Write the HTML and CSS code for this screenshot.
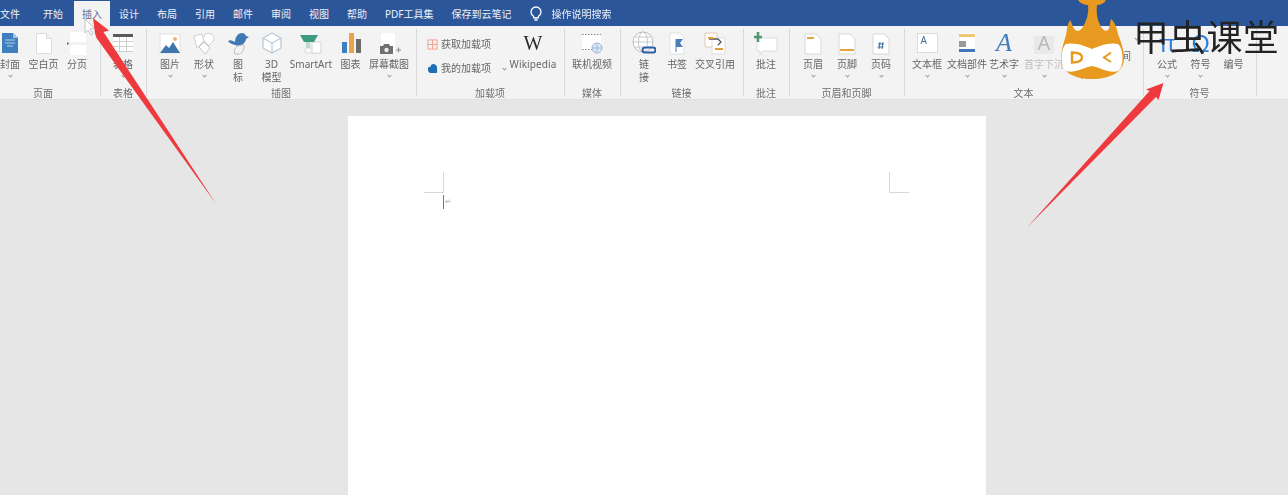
FILE: index.html
```html
<!DOCTYPE html>
<html lang="zh-CN">
<head>
<meta charset="utf-8">
<title>Word 插入</title>
<link rel="stylesheet" href="styles.css">
</head>
<body>
<div class="app">
  <nav class="tabs">
    <span class="tab tab-file">文件</span>
    <span class="tab">开始</span>
    <span class="tab active">插入</span>
    <span class="tab">设计</span>
    <span class="tab">布局</span>
    <span class="tab">引用</span>
    <span class="tab">邮件</span>
    <span class="tab">审阅</span>
    <span class="tab">视图</span>
    <span class="tab">帮助</span>
    <span class="tab">PDF工具集</span>
    <span class="tab">保存到云笔记</span>
    <svg class="bulb" viewBox="0 0 12 16"><path d="M3.6 10.500C1.800 9 1 7.800 1 6a5 5 0 0 1 10 0c0 1.800-.8 3-2.600 4.500L8 12H4z" fill="none" stroke="#fff" stroke-width="1.300"/><path d="M4.500 14h3" stroke="#fff" stroke-width="1.500"/></svg>
    <span class="tab tell">操作说明搜索</span>
  </nav>

  <section class="ribbon">
    <div class="group g-page">
      <div class="items">
        <div class="item w34">
          <svg class="ic" viewBox="0 0 24 26"><path d="M4 3h11l5 5v15H4z" fill="#3f7fbf"/><path d="M15 3l5 5h-5z" fill="#9cc2e5"/><path d="M7 10h10M7 13h10M9 16h6" stroke="#b5d2ec" stroke-width="1.200"/></svg>
          <span class="lb">封面</span><i class="caret"></i>
        </div>
        <div class="item w33">
          <svg class="ic" viewBox="0 0 24 26"><path d="M4.500 3.500h10l5 5v15h-15z" fill="#fff" stroke="#dcdcdc"/><path d="M14.500 3.500v5h5" fill="#f0f0f0" stroke="#dcdcdc"/></svg>
          <span class="lb">空白页</span>
        </div>
        <div class="item w34">
          <svg class="ic" viewBox="0 0 24 26"><path d="M5 2h16v10H5zM5 15h16v10H5z" fill="#fff"/><path d="M2 12l2.500 1.500L2 15z" fill="#777"/></svg>
          <span class="lb">分页</span>
        </div>
      </div>
      <div class="glabel">页面</div>
    </div>

    <div class="group g-table">
      <div class="items">
        <div class="item w46">
          <svg class="ic" viewBox="0 0 24 26"><path d="M2 4h20v18H2z" fill="#fff"/><path d="M2 4h20v3H2z" fill="#595959"/><path d="M2 11.500h20M2 16.500h20M8.500 7v15M15.500 7v15M2 21.500h20" stroke="#cfcfcf"/></svg>
          <span class="lb">表格</span><i class="caret"></i>
        </div>
      </div>
      <div class="glabel">表格</div>
    </div>

    <div class="group g-illus">
      <div class="items">
        <div class="item w34">
          <svg class="ic" viewBox="0 0 24 26"><path d="M2 4h20v19H2z" fill="#fff" stroke="#e2e2e2"/><circle cx="17" cy="9" r="2" fill="#f0b070"/><path d="M2 23l6-8 3 3 4-6 7 11z" fill="#3f76ad"/></svg>
          <span class="lb">图片</span><i class="caret"></i>
        </div>
        <div class="item w34">
          <svg class="ic" viewBox="0 0 24 26"><path d="M2 6l8-2 2 7-7 7z" fill="#fff" stroke="#d2d2d2"/><path d="M13 4a6 6 0 0 1 9 6l-5 6-6-7z" fill="#fff" stroke="#d2d2d2"/><path d="M7 17l5-5 6 6-5 6z" fill="#fff" stroke="#c4c4c4"/></svg>
          <span class="lb">形状</span><i class="caret"></i>
        </div>
        <div class="item w34">
          <svg class="ic" viewBox="0 0 24 26"><path d="M2 11c3-2 5 0 7 1 0-5 3-9 7-9 2 0 3 1 4 3l3 1-3 2c-1 5-5 8-11 6-3-1-6-2-7-4z" fill="#3f78b5"/><path d="M9 24c-2-5 1-9 9-9 0 7-3 10-9 9z" fill="#f4f4f4" stroke="#bdbdbd"/></svg>
          <span class="lb">图<br>标</span>
        </div>
        <div class="item w33">
          <svg class="ic" viewBox="0 0 24 26"><path d="M12 3l9 5v10l-9 5-9-5V8z" fill="#fff" stroke="#a9bccd"/><path d="M3 8l9 5 9-5M12 13v10" fill="none" stroke="#a9bccd"/></svg>
          <span class="lb">3D<br>模型</span>
        </div>
        <div class="item w46">
          <svg class="ic" viewBox="0 0 24 26"><path d="M6 18h16v5H6z" fill="#f8f8f8" stroke="#ddd"/><path d="M13 12h9v11h-9z" fill="#fff" stroke="#d5d5d5"/><path d="M1 5h18l-4 7H5z" fill="#3f9a80"/><path d="M7 12h4v6H7z" fill="#bcdcd1"/></svg>
          <span class="lb">SmartArt</span>
        </div>
        <div class="item w33">
          <svg class="ic" viewBox="0 0 24 26"><path d="M3 12h5v11H3z" fill="#3f7fbf"/><path d="M10 3h5v20h-5z" fill="#eba34a"/><path d="M17 9h5v14h-5z" fill="#6b6b6b"/></svg>
          <span class="lb">图表</span>
        </div>
        <div class="item w44">
          <svg class="ic" viewBox="0 0 24 26"><path d="M4 3h14v21H4z" fill="#fff"/><path d="M3 16h3l1-2h5l1 2h3v8H3z" fill="#707070"/><circle cx="9.500" cy="20" r="2.200" fill="#eee"/><path d="M19 20h5M21.500 17.500v5" stroke="#888"/></svg>
          <span class="lb">屏幕截图</span><i class="caret"></i>
        </div>
      </div>
      <div class="glabel">插图</div>
    </div>

    <div class="group g-addin">
      <div class="items">
        <div class="col-small addin-rows">
          <div class="row">
            <svg class="sm" viewBox="0 0 12 12"><path d="M1 1h10v10H1zM1 6h10M6 1v10" fill="none" stroke="#ef9c8b"/></svg>
            <span class="lb">获取加载项</span>
          </div>
          <div class="row">
            <svg class="sm" viewBox="0 0 12 12"><path d="M1 6c0-2 2-2 3-2 0-2 1-3 3-3s4 2 4 4v5c0 1-1 1-2 1H4c-2 0-3-2-3-5z" fill="#1f6fb5"/></svg>
            <span class="lb">我的加载项</span><i class="caret caret-row"></i>
          </div>
        </div>
        <div class="item w46">
          <span class="wiki-w">W</span>
          <span class="lb wiki">Wikipedia</span>
        </div>
      </div>
      <div class="glabel">加载项</div>
    </div>

    <div class="group g-media">
      <div class="items">
        <div class="item w56">
          <svg class="ic" viewBox="0 0 24 26"><path d="M2 4h19v16H2z" fill="#fff"/><path d="M2 4.500h19M2 19.500h19" stroke="#888" stroke-dasharray="1.500 1.500"/><circle cx="17" cy="18" r="5" fill="#dce8f5" stroke="#9db9d8"/><path d="M12 18h10M17 13v10" stroke="#9db9d8"/></svg>
          <span class="lb">联机视频</span>
        </div>
      </div>
      <div class="glabel">媒体</div>
    </div>

    <div class="group g-links">
      <div class="items">
        <div class="item w32">
          <svg class="ic" viewBox="0 0 24 26"><circle cx="11" cy="12" r="10" fill="#fff" stroke="#bcbcbc"/><ellipse cx="11" cy="12" rx="4.500" ry="10" fill="none" stroke="#c8c8c8"/><path d="M1 12h20M2.500 7h17M2.500 17h17" stroke="#c8c8c8"/><path d="M13 22.500a2.500 2.500 0 0 1 0-5h8a2.500 2.500 0 0 1 0 5z" fill="none" stroke="#2d62a6" stroke-width="2"/></svg>
          <span class="lb">链<br>接</span>
        </div>
        <div class="item w34">
          <svg class="ic" viewBox="0 0 24 26"><path d="M5 3h10l4 4v17H5z" fill="#fff" stroke="#e2e2e2"/><path d="M11 9h7l-3 4 3 4h-7z" fill="#4a7fb5"/><path d="M11 9v13" stroke="#4a7fb5"/></svg>
          <span class="lb">书签</span>
        </div>
        <div class="item w42">
          <svg class="ic" viewBox="0 0 24 26"><path d="M2 3h12v14H2z" fill="#fff" stroke="#e0c9a6"/><path d="M9 8h13v16H9z" fill="#fff" stroke="#dedede"/><path d="M6 9h9l3 3-3 3" fill="none" stroke="#555" stroke-width="1.300"/><path d="M12 19h8" stroke="#e39a3b" stroke-width="2"/><path d="M5 8h5" stroke="#e39a3b" stroke-width="2"/></svg>
          <span class="lb">交叉引用</span>
        </div>
      </div>
      <div class="glabel">链接</div>
    </div>

    <div class="group g-comment">
      <div class="items">
        <div class="item w46">
          <svg class="ic ic-wide" viewBox="0 0 24 26"><path d="M3 8h20v13H9l-3 4v-4H3z" fill="#fff" stroke="#dcdcdc"/><path d="M4 2v10M0 7h8" stroke="#4d9a6e" stroke-width="2.500"/></svg>
          <span class="lb">批注</span>
        </div>
      </div>
      <div class="glabel">批注</div>
    </div>

    <div class="group g-hf">
      <div class="items">
        <div class="item w34">
          <svg class="ic" viewBox="0 0 24 26"><path d="M4 4h11l5 5v15H4z" fill="#fff" stroke="#d8d8d8"/><path d="M6 8h7" stroke="#e8a33d" stroke-width="2"/></svg>
          <span class="lb">页眉</span><i class="caret"></i>
        </div>
        <div class="item w34">
          <svg class="ic" viewBox="0 0 24 26"><path d="M4 4h11l5 5v15H4z" fill="#fff" stroke="#d8d8d8"/><path d="M5 20h14" stroke="#e8a33d" stroke-width="2"/></svg>
          <span class="lb">页脚</span><i class="caret"></i>
        </div>
        <div class="item w34">
          <svg class="ic" viewBox="0 0 24 26"><path d="M4 4h11l5 5v15H4z" fill="#fff" stroke="#d8d8d8"/><path d="M11 12l-1 7M14 12l-1 7M9 14h6M8.500 17h6" stroke="#3c6ea5"/></svg>
          <span class="lb">页码</span><i class="caret"></i>
        </div>
      </div>
      <div class="glabel">页眉和页脚</div>
    </div>

    <div class="group g-text">
      <div class="items">
        <div class="item w38">
          <div class="glyph-box box-a">A</div>
          <span class="lb">文本框</span><i class="caret"></i>
        </div>
        <div class="item w42">
          <svg class="ic" viewBox="0 0 24 26"><path d="M5 3h15v20H5z" fill="#fff"/><path d="M4 4h16v3H4z" fill="#edc777"/><path d="M4 11h7v6H4z" fill="#9a9a9a"/><path d="M4 19h16v3H4z" fill="#3f78b5"/></svg>
          <span class="lb">文档部件</span><i class="caret"></i>
        </div>
        <div class="item w32">
          <div class="glyph art">A</div>
          <span class="lb">艺术字</span><i class="caret"></i>
        </div>
        <div class="item w48 dim">
          <div class="glyph dropcap">A</div>
          <span class="lb">首字下沉</span><i class="caret"></i>
        </div>
        <div class="col-small text-rows">
          <div class="row-tight"><span class="lb">签名行</span><i class="caret caret-sign"></i></div>
          <div class="row-tight"><span class="lb">日期和时间</span></div>
          <div class="row-tight"><span class="lb">对象</span></div>
        </div>
      </div>
      <div class="glabel">文本</div>
    </div>

    <div class="group g-symbol">
      <div class="items">
        <div class="item w34">
          <div class="glyph math">π</div>
          <span class="lb">公式</span><i class="caret"></i>
        </div>
        <div class="item w33">
          <div class="glyph math">Ω</div>
          <span class="lb">符号</span><i class="caret"></i>
        </div>
        <div class="item w33">
          <div class="glyph"></div>
          <span class="lb">编号</span>
        </div>
      </div>
      <div class="glabel">符号</div>
    </div>
    <div class="group g-end"></div>
  </section>

  <main class="canvas">
    <div class="sheet">
      <div class="corners">
        <span class="corner corner-l"></span>
        <span class="corner corner-r"></span>
      </div>
      <div class="caret-line"><span class="text-cursor"></span><span class="para">↵</span></div>
    </div>
  </main>
</div>

<svg class="overlay arrows" viewBox="0 0 1288 495">
  <path d="M85 19l0 14 3-3 3 5 2-1-3-5 4-1z" fill="#fff" stroke="#b5b5b5" stroke-width=".8"/>
  <path d="M93 18L109 30.500 103.500 32 216.500 204.500 96.500 38 95 33.500z" fill="#ee3a3e"/>
  <path d="M1163.500 83L1158.500 100 1156 97 1027 227.500 1149.500 91 1146 89.500z" fill="#ee3a3e"/>
</svg>
<svg class="overlay logo" viewBox="1058 0 68 82">
  <path d="M1078 0L1106 0C1104 4 1099 5 1097 5C1096 12 1097 19 1100 25C1102 30 1106 32 1108 30C1110 28 1110 22 1111 19C1115 22 1117 29 1118 34C1121 42 1124 50 1124 59C1124 72 1110 79 1092 79C1074 79 1061 72 1061 59C1061 50 1064 42 1066 35C1067 28 1068 23 1070 20C1072 23 1073 28 1075 30C1078 32 1082 30 1084 25C1087 19 1089 12 1088 5C1086 5 1080 4 1078 0Z" fill="#e79a1f"/>
  <path d="M1066 44C1075 42 1085 46 1092 49C1099 46 1110 42 1118 44C1124 49 1124 68 1118 71C1110 74 1099 67 1092 66C1085 67 1073 74 1066 71C1060 67 1060 49 1066 44Z" fill="#fff"/>
  <path d="M1072 52.500C1079 52.500 1082 55 1082 57.500C1082 60 1079 62.500 1072 62.500Z" fill="none" stroke="#e79a1f" stroke-width="2.400"/>
  <path d="M1111 52.500L1104 57.500 1111 62" fill="none" stroke="#e79a1f" stroke-width="2"/>
</svg>
<div class="overlay brand">甲虫课堂</div>
</body>
</html>
```
FILE: styles.css
```css
* { box-sizing: border-box; }
html, body { margin: 0; padding: 0; height: 100%; overflow: hidden; }
body {
  position: relative;
  width: 1288px;
  height: 495px;
  background: #e6e6e7;
  font-family: "Noto Sans", "Noto Sans CJK SC", sans-serif;
  font-size: 10px;
  color: #666;
}
.app { display: flex; flex-direction: column; height: 495px; filter: blur(0.55px); }

.tabs {
  display: flex;
  align-items: center;
  height: 26px;
  flex: none;
  background: #2b579a;
  color: #eef2f8;
  padding-top: 1px;
}
.tab {
  display: flex;
  align-items: center;
  height: 25px;
  padding: 0 9px;
  white-space: nowrap;
}
.tab-file { width: 34px; padding: 0 14px 0 0; }
.tab.active { background: #f3f3f3; color: #5c6f8c; margin-left: 2px; padding: 0 8px; }
.bulb { width: 12px; height: 16px; margin-left: 9px; flex: none; }
.tell { padding-left: 10px; }

.ribbon {
  display: flex;
  flex: none;
  height: 74px;
  margin-left: -14px;
  width: 1302px;
  background: #f3f3f3;
  border-bottom: 1px solid #e0e0e0;
}
.group {
  display: flex;
  flex-direction: column;
  height: 74px;
  flex: none;
  padding-top: 4px;
  background: linear-gradient(#d9d9d9, #d9d9d9) left 3px / 1px 67px no-repeat;
}
.items { display: flex; flex: 1; min-height: 0; }
.glabel { height: 14px; line-height: 14px; text-align: center; flex: none; color: #6e6e6e; }

.g-page { width: 114px; padding-left: 7px; background: none; }
.g-table { width: 46px; }
.g-illus { width: 270px; padding-left: 7px; }
.g-addin { width: 148px; }
.g-media { width: 56px; }
.g-links { width: 123px; padding-left: 8px; }
.g-comment { width: 46px; }
.g-hf { width: 115px; padding-left: 7px; }
.g-text { width: 239px; padding-left: 4px; }
.g-symbol { width: 113px; padding-left: 7px; }
.g-end { flex: 1; }
.g-page .glabel, .g-illus .glabel, .g-hf .glabel, .g-symbol .glabel { margin-left: -7px; }
.g-links .glabel { margin-left: -8px; }
.g-text .glabel { margin-left: -4px; }

.item {
  display: flex;
  flex-direction: column;
  align-items: center;
  flex: none;
}
.w32 { width: 32px; } .w33 { width: 33px; } .w34 { width: 34px; } .w38 { width: 38px; }
.w42 { width: 42px; } .w44 { width: 44px; } .w46 { width: 46px; } .w48 { width: 48px; }
.w56 { width: 56px; }

.ic { width: 24px; height: 26px; margin-bottom: 2px; flex: none; }
.lb { line-height: 13px; text-align: center; white-space: nowrap; }
.wiki { letter-spacing: 0.1px; }
.caret {
  display: block;
  width: 3px;
  height: 3px;
  margin-top: 3px;
  border-right: 1px solid #9a9a9a;
  border-bottom: 1px solid #9a9a9a;
  transform: rotate(45deg);
}
.caret-row { margin: 0 0 0 9px; }
.caret-sign { margin: 0 0 0 24px; }

.col-small { display: flex; flex-direction: column; flex: none; }
.addin-rows { width: 94px; padding: 2px 0 0 11px; }
.row { display: flex; align-items: center; height: 24px; gap: 3px; }
.sm { width: 11px; height: 11px; flex: none; }
.text-rows { padding: 0 0 0 13px; margin-top: -1px; }
.row-tight { display: flex; align-items: center; height: 18px; }

.wiki-w {
  height: 28px;
  line-height: 27px;
  font-family: "Liberation Serif", serif;
  font-size: 20px;
  color: #2a2a2a;
}
.glyph {
  width: 24px;
  height: 28px;
  line-height: 26px;
  text-align: center;
  flex: none;
}
.glyph-box {
  width: 21px;
  height: 20px;
  margin: 3px 0 5px;
  padding: 1px 0 0 3px;
  font-size: 10px;
  line-height: 11px;
  color: #3f6ea5;
  background: #fff;
  border: 1px solid #dcdcdc;
  flex: none;
}
.art { font-family: "Liberation Serif", serif; font-style: italic; font-size: 26px; color: #3f7fbf; }
.dropcap { font-family: "Noto Sans", sans-serif; font-size: 20px; color: #b8b8b8; background: linear-gradient(#e9e9e9, #e9e9e9) 60% 60% / 20px 18px no-repeat; }
.dim { color: #bcbcbc; }
.math { font-size: 24px; color: #2f7fd6; }

.canvas { flex: 1; min-height: 0; padding: 16px 0 0 348px; overflow: hidden; }
.sheet { width: 638px; height: 400px; background: #fff; padding: 56px 77px 0 76px; }
.corners { display: flex; justify-content: space-between; }
.corner { display: block; width: 20px; height: 21px; border-bottom: 1px solid #d8d8d8; }
.corner-l { border-right: 1px solid #d8d8d8; }
.corner-r { border-left: 1px solid #d8d8d8; }
.caret-line { display: flex; align-items: flex-start; padding: 2px 0 0 19px; height: 16px; }
.text-cursor { display: block; width: 1px; height: 14px; background: #777; }
.para { font-size: 7px; line-height: 10px; margin: 2px 0 0 1px; color: #999; }

.overlay { position: absolute; filter: blur(0.4px); }
.arrows { left: 0; top: 0; width: 1288px; height: 495px; }
.logo { left: 1058px; top: 0; width: 68px; height: 82px; }
.brand {
  left: 1133px;
  top: 15px;
  font-family: "Noto Sans CJK SC", sans-serif;
  font-size: 36px;
  letter-spacing: 0.7px;
  line-height: 40px;
  white-space: nowrap;
  color: #222;
}
```
